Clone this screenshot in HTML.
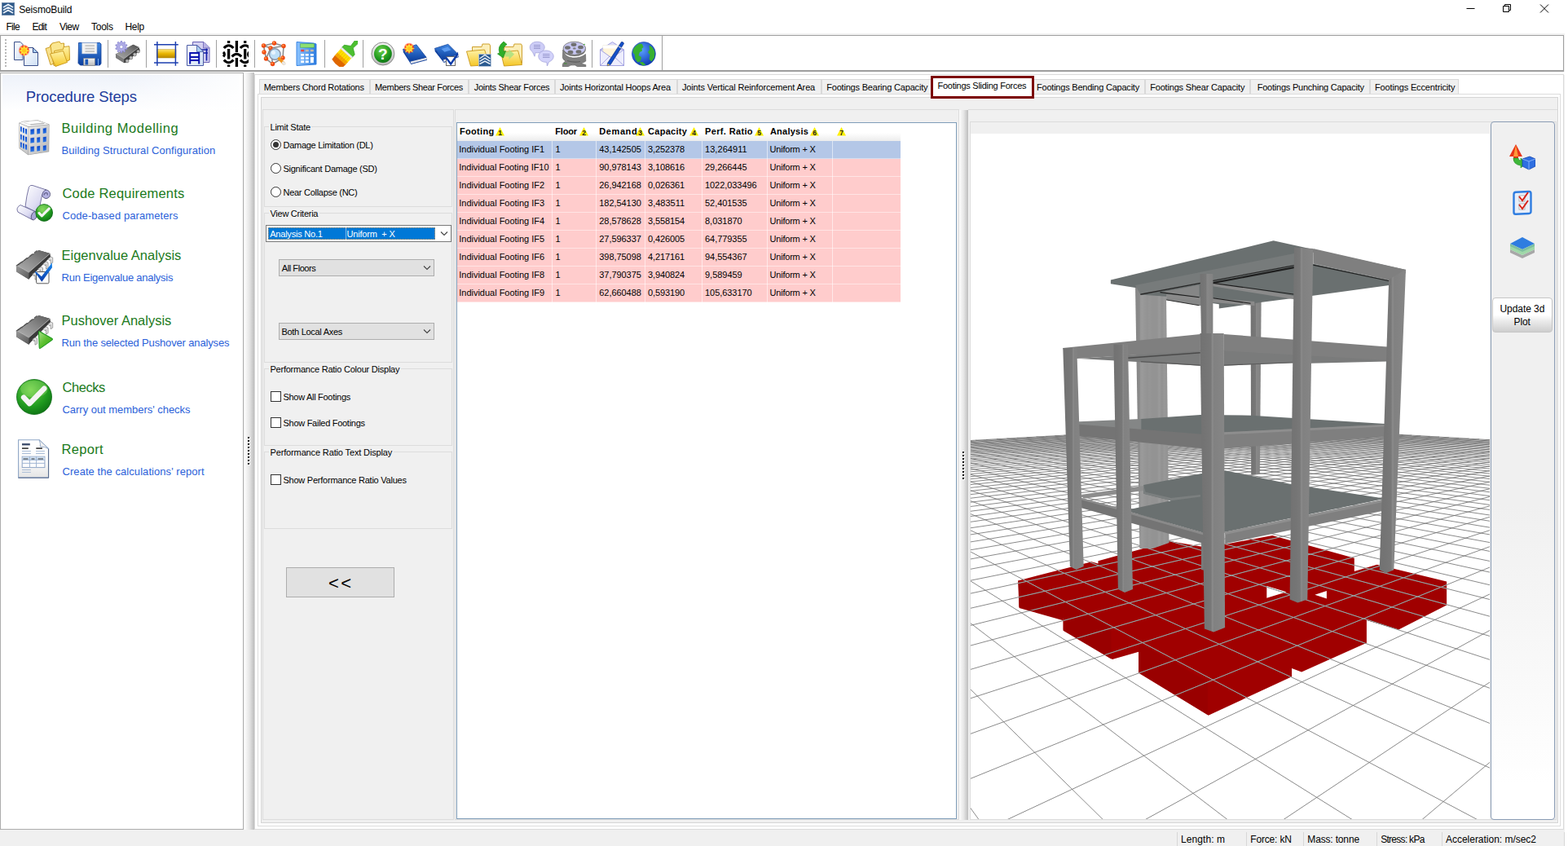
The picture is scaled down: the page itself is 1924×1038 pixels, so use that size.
<!DOCTYPE html>
<html lang="en"><head><meta charset="utf-8"><title>SeismoBuild</title>
<style>
*{box-sizing:border-box;margin:0;padding:0}
html,body{width:1924px;height:1038px;overflow:hidden;background:#fff}
body{position:relative;font-family:"Liberation Sans",sans-serif;font-size:11px;color:#000}
div,span,svg{position:absolute}
.grp{position:absolute;left:0;top:0;width:0;height:0}
.t{white-space:pre;line-height:normal;display:block}
#win{left:0;top:41px;width:1920px;height:997px;background:#f0f0f0}
#titlebar{left:0;top:0;width:1924px;height:22px;background:#fff}
#menubar{left:0;top:22px;width:1924px;height:19px;background:#fff}
#toolbar{left:0;top:43px;width:1919px;height:45px;background:#fff;border:1px solid #a0a0a0;border-bottom:2px solid #9e9e9e}
#gap{left:0;top:88px;width:1920px;height:4px;background:#fdfdfd}
#tbend{left:812px;top:44px;width:1px;height:42px;background:#a0a0a0}
.sep{width:1px;top:49px;height:34px;background:#a0a0a0}
#leftpanel{left:0;top:89px;width:299px;height:929px;background:#fff;border:1px solid #adadad}
#lphead{left:2px;top:2px;width:291px;height:44px;background:linear-gradient(90deg,rgba(255,255,255,0) 50%,rgba(255,255,255,.85) 100%),linear-gradient(#eef2fa,#fff)}
.split{background:linear-gradient(90deg,#fdfdfd,#e6e6e6 50%,#bdbdbd)}
#split1{left:300px;top:89px;width:12px;height:929px}
#split2{left:1177px;top:135px;width:11px;height:871px}
.dots{width:2px;background:repeating-linear-gradient(#111 0 2px,transparent 2px 4px)}
.dots.w{background:repeating-linear-gradient(#fff 0 2px,transparent 2px 4px)}
#rc{left:312px;top:91px;width:1607px;height:927px;background:#fff;border:1px solid #dadada}
.tab{top:97px;height:19px;background:#f0f0f0;border:1px solid #d9d9d9;border-bottom:none}
#tabact{left:1142px;top:93px;width:127px;height:28px;background:#fff;border:3px solid #7b0000}
#tabpage{left:316px;top:115px;width:1599px;height:899px;background:#fff;border:1px solid #dcdcdc}
#inner{left:320px;top:119px;width:1592px;height:891px;background:#f0f0f0;border:1px solid #d5d5d5}
.pn{border:1px solid #dcdcdc;background:#f0f0f0}
#ctl{left:322px;top:134px;width:235px;height:872px}
#tblpn{left:558px;top:134px;width:619px;height:872px}
#tbl{left:560px;top:150px;width:614px;height:855px;background:#fff;border:1px solid #7f9db9}
#vpn{left:1190px;top:149px;width:720px;height:857px}
#view{left:1191px;top:164px;width:637px;height:841px;background:#fff;overflow:hidden}
#rtb{left:1829px;top:149px;width:79px;height:857px;border:1px solid #8a9cb4;border-radius:4px;background:linear-gradient(#f0f0f0 0,#f0f0f0 55%,#fff 95%)}
#upd{left:1831px;top:365px;width:74px;height:43px;border:1px solid #c6c6c6;border-radius:4px;background:linear-gradient(#fff 0,#fff 50%,#ebebeb 68%,#cecece 100%)}
.gb{border:1px solid #dcdcdc}
.gbl{background:#f0f0f0;height:12px}
.radio{width:13px;height:13px;border-radius:50%;border:1px solid #333;background:#fff}
.radio i{position:absolute;left:2px;top:2px;width:7px;height:7px;border-radius:50%;background:#333}
.chk{width:13px;height:13px;border:1px solid #333;background:#fff}
.combo{background:#e1e1e1;border:1px solid #adadad}
#status{left:0;top:1018px;width:1920px;height:20px;background:#f0f0f0}
.ssep{top:1021px;width:1px;height:17px;background:#d7d7d7}

</style></head>
<body>
<div id="titlebar"></div>
<div id="menubar"></div>
<div id="win"></div>
<div id="toolbar"></div><div id="gap"></div>
<div id="tbend"></div>
<svg width="0" height="0" style="left:0;top:0"><defs><linearGradient id="gFold" x1="0" y1="0" x2="0" y2="1"><stop offset="0" stop-color="#fff3a8"/><stop offset="1" stop-color="#f4c626"/></linearGradient><linearGradient id="gDoc" x1="0" y1="0" x2="1" y2="1"><stop offset="0" stop-color="#ffffff"/><stop offset="1" stop-color="#cfe0f5"/></linearGradient><linearGradient id="gBlue" x1="0" y1="0" x2="0" y2="1"><stop offset="0" stop-color="#3f86e0"/><stop offset="1" stop-color="#0b3f9f"/></linearGradient><linearGradient id="gChip" x1="0" y1="0" x2="1" y2="1"><stop offset="0" stop-color="#9a9a9a"/><stop offset="1" stop-color="#3c3c3c"/></linearGradient><linearGradient id="gGold" x1="0" y1="0" x2="0" y2="1"><stop offset="0" stop-color="#ffe36a"/><stop offset=".5" stop-color="#e8b400"/><stop offset="1" stop-color="#b88700"/></linearGradient><radialGradient id="gGreen" cx=".4" cy=".3" r=".8"><stop offset="0" stop-color="#6fd04a"/><stop offset=".6" stop-color="#1f9a1f"/><stop offset="1" stop-color="#0a6a12"/></radialGradient><radialGradient id="gGlobe" cx=".4" cy=".35" r=".7"><stop offset="0" stop-color="#5aa0ff"/><stop offset="1" stop-color="#0a35b0"/></radialGradient><radialGradient id="gSpark" cx=".5" cy=".5" r=".5"><stop offset="0" stop-color="#ffe24a"/><stop offset=".45" stop-color="#ffb020"/><stop offset=".7" stop-color="#ff3a20"/><stop offset="1" stop-color="#ff3a20" stop-opacity="0"/></radialGradient><linearGradient id="gLav" x1="0" y1="0" x2="1" y2="1"><stop offset="0" stop-color="#ffffff"/><stop offset="1" stop-color="#b9b6e8"/></linearGradient><linearGradient id="gGrey" x1="0" y1="0" x2="0" y2="1"><stop offset="0" stop-color="#f4f4f4"/><stop offset="1" stop-color="#b9b9b9"/></linearGradient><linearGradient id="gCalc" x1="0" y1="0" x2="1" y2="0"><stop offset="0" stop-color="#8cc4ff"/><stop offset="1" stop-color="#2f7de0"/></linearGradient></defs></svg>
<div style="left:6px;top:48px;width:2px;height:34px;background:repeating-linear-gradient(#b8b8b8 0 2px,transparent 2px 4px)"></div>
<div class="sep" style="left:132px"></div>
<div class="sep" style="left:179px"></div>
<div class="sep" style="left:265px"></div>
<div class="sep" style="left:312px"></div>
<div class="sep" style="left:398px"></div>
<div class="sep" style="left:445px"></div>
<div class="sep" style="left:726px"></div>
<svg style="left:16px;top:50px" width="32" height="32" viewBox="0 0 32 32"><path d="M1.500 1.500h7.500l3 3v19h-10.500z" fill="url(#gDoc)" stroke="#3a4f8a"/><path d="M13.500 8.500h11l6 6v16h-17z" fill="url(#gDoc)" stroke="#3a4f8a"/><path d="M24.500 8.500v6h6z" fill="#a9cdf0" stroke="#3a4f8a"/><circle cx="13.600" cy="11.800" r="7.200" fill="url(#gSpark)"/><path d="M13.600 5l1.300 4.300 3.900-2.200-2.200 3.900 4.300 1.300-4.300 1.300 2.200 3.900-3.900-2.200-1.300 4.300-1.300-4.300-3.900 2.200 2.200-3.900-4.300-1.300 4.300-1.300-2.200-3.900 3.900 2.200z" fill="#ffe23a"/><circle cx="13.600" cy="11.800" r="2.600" fill="#ffc81a"/></svg>
<svg style="left:55px;top:50px" width="32" height="32" viewBox="0 0 32 32"><path d="M1 9.500l5-1.500 1-3 8.500-2 1 2.500 3.500-1 4 19-17 6z" fill="#f8e08a" stroke="#c8961a" stroke-width=".9"/><path d="M7 6.500l2-3.500 9-2 1.500 2.500 4-.5v5l5.500-.5 1 16-19 7z" fill="#fae690" stroke="#c8961a" stroke-width=".9"/><path d="M11.500 12.500l11-2 .5-3 7-.8 .5 16.800-17 7.500z" fill="url(#gFold)" stroke="#c8961a" stroke-width=".9"/><path d="M6.500 16l16-3.500 5 14-14.500 5z" fill="url(#gFold)" stroke="#c8961a" stroke-width=".9"/></svg>
<svg style="left:94px;top:50px" width="32" height="32" viewBox="0 0 32 32"><path d="M2.500 2.500h26l1.500 1.500v24l-1.500 2h-24l-2.500-2.500z" fill="url(#gBlue)" stroke="#0a3a94" stroke-width=".8"/><path d="M6.500 2.500h18.500v13.500h-18.500z" fill="#f2f2f2" stroke="#8aa6d0" stroke-width=".6"/><path d="M10.500 6.200h11.500M10.500 9.700h11.500M10.500 13.200h11.500" stroke="#c4c4c4" stroke-width="1.700"/><path d="M8.500 21.500h14v9h-14z" fill="url(#gGrey)" stroke="#7a7a7a" stroke-width=".6"/><rect x="10.500" y="22.700" width="3.600" height="6.800" fill="#1b58b8"/><path d="M26.500 22v8" stroke="#7fb0f0" stroke-width="1"/></svg>
<svg style="left:140px;top:50px" width="32" height="32" viewBox="0 0 32 32"><defs><linearGradient id="gChipTop32" x1="0" y1="1" x2="1" y2="0"><stop offset="0" stop-color="#a8a8a8"/><stop offset=".6" stop-color="#7c7c7c"/><stop offset="1" stop-color="#4a4a4a"/></linearGradient></defs><path d="M1.900 16.400L23.400 4.800l7 3.200 1.400 3.800-17.300 14.900-1.900 .5-10.200-6.100z" fill="#3c3c3c"/><path d="M2.800 16L23.400 4.800l7 3.200-18.200 14z" fill="url(#gChipTop32)"/><path d="M1.900 16.400l.9-.4 9.400 6v5.200l-9.800-6.100z" fill="#7c7c7c"/><path d="M2.800 16l9.400 6L30.400 8" fill="none" stroke="#cfcfcf" stroke-width=".6"/><circle cx="16" cy="24.800" r="2.100" fill="#bdbdbd" stroke="#555" stroke-width=".6"/><circle cx="20.700" cy="20.800" r="2.100" fill="#bdbdbd" stroke="#555" stroke-width=".6"/><circle cx="25.300" cy="16.800" r="2.100" fill="#bdbdbd" stroke="#555" stroke-width=".6"/><circle cx="29.600" cy="13" r="1.900" fill="#bdbdbd" stroke="#555" stroke-width=".6"/><polygon points="8.2,0.3 9.6,0.3 10.0,2.4 11.0,2.7 12.6,1.3 13.8,2.2 12.9,4.1 13.5,4.9 15.6,4.7 16.0,6.0 14.2,7.1 14.2,8.1 16.0,9.2 15.6,10.5 13.5,10.3 12.9,11.1 13.8,13.0 12.6,13.9 11.0,12.5 10.0,12.8 9.6,14.9 8.2,14.9 7.8,12.8 6.8,12.5 5.2,13.9 4.0,13.0 4.9,11.1 4.3,10.3 2.2,10.5 1.8,9.2 3.6,8.1 3.6,7.1 1.8,6.0 2.2,4.7 4.3,4.9 4.9,4.1 4.0,2.2 5.2,1.3 6.8,2.7 7.8,2.4" fill="#aeabe6" stroke="#7d7ac8" stroke-width=".7"/><circle cx="8.900" cy="7.600" r="2" fill="#fff" stroke="#7d7ac8" stroke-width=".5"/></svg>
<svg style="left:188px;top:50px" width="32" height="32" viewBox="0 0 32 32"><rect x="4.200" y="10.800" width="23.800" height="10.200" fill="url(#gGold)" stroke="#b08a10" stroke-width=".5"/><path d="M4.900 1v29.700M27.400 1v29.700M1 4.800h29.800M1 27h29.800" stroke="#1d3fb0" stroke-width="1.500" fill="none"/></svg>
<svg style="left:227px;top:50px" width="32" height="32" viewBox="0 0 32 32"><path d="M9.500 1.500h13.500l7 7v18h-20.500z" fill="#d4d0f0" stroke="#6a62b5"/><path d="M22.500 1.500v7.500h7.500" fill="#b8b2e4" stroke="#6a62b5" stroke-width=".8"/><path d="M20 11h8M20 15h8M26.500 9.500v15" stroke="#1420a8" stroke-width="1.700" fill="none"/><path d="M2.500 5.500h12.500l7.500 7.500v17.500h-20z" fill="url(#gDoc)" stroke="#4a5aa5"/><path d="M14.500 5.500v8h8z" fill="#a9cdf0" stroke="#4a5aa5" stroke-width=".8"/><path d="M5.200 15h13M5.200 20h13M5.200 24h13M6.200 14v14.500M17.200 14v14.500" stroke="#0a14b0" stroke-width="2" fill="none"/></svg>
<svg style="left:273px;top:50px" width="32" height="32" viewBox="0 0 32 32"><path d="M7.600 0v3M7.600 10v12.500M7.600 29.500v2.500M17.400 0v14M17.400 21v11M27.700 0v3M27.700 10v12.500M27.700 29.500v2.500" stroke="#000" stroke-width="3.300" fill="none"/><path d="M1.800 9q5.800-6.500 11.600 0M21.900 9q5.800-6.500 11.600 0M11.600 19.500q5.800-6.500 11.600 0M1.800 23.500q5.800 6.500 11.600 0M21.900 23.500q5.800 6.500 11.600 0M1 14q2.800 2.500 0 5.500M33 14q-2.800 2.500 0 5.500" stroke="#000" stroke-width="3.100" fill="none"/></svg>
<svg style="left:320px;top:50px" width="32" height="32" viewBox="0 0 32 32"><path d="M3.500 6L16.500 3 28 6.500 27 21 14.500 28.500 6.500 22zM3.500 6l8.500 3 16-2.500M12 9l-5.500 13M12 9l2.500 19.500" fill="none" stroke="#8a8a8a" stroke-width="1.600"/><circle cx="3.5" cy="6" r="2.700" fill="#f04a12"/><circle cx="2.9" cy="5.3" r="1.100" fill="#ff9a4a"/><circle cx="16.5" cy="3" r="2.700" fill="#f04a12"/><circle cx="15.9" cy="2.3" r="1.100" fill="#ff9a4a"/><circle cx="28" cy="6.5" r="2.700" fill="#f04a12"/><circle cx="27.4" cy="5.8" r="1.100" fill="#ff9a4a"/><circle cx="6.5" cy="22" r="2.700" fill="#f04a12"/><circle cx="5.9" cy="21.3" r="1.100" fill="#ff9a4a"/><circle cx="4" cy="14" r="2.700" fill="#f04a12"/><circle cx="3.4" cy="13.3" r="1.100" fill="#ff9a4a"/><circle cx="27" cy="21" r="2.700" fill="#f04a12"/><circle cx="26.4" cy="20.3" r="1.100" fill="#ff9a4a"/><circle cx="14.5" cy="28.5" r="2.700" fill="#f04a12"/><circle cx="13.9" cy="27.8" r="1.100" fill="#ff9a4a"/><circle cx="12" cy="9" r="2.700" fill="#f04a12"/><circle cx="11.4" cy="8.3" r="1.100" fill="#ff9a4a"/><circle cx="17.300" cy="16.500" r="6.800" fill="#bfe0f8" stroke="#8a94a8" stroke-width="1.500"/><circle cx="15.500" cy="14.500" r="2.500" fill="#e8f5ff"/><path d="M22.500 22l6 6" stroke="#f0941a" stroke-width="3.600" stroke-linecap="round"/><path d="M27.500 27l1.300 1.300" stroke="#e8e8e8" stroke-width="3.400" stroke-linecap="round"/></svg>
<svg style="left:359px;top:50px" width="32" height="32" viewBox="0 0 32 32"><path d="M5 1.500l21 1.500 3 1v25l-24 1.500z" fill="url(#gCalc)" stroke="#2a7ae0" stroke-width=".9"/><rect x="9.700" y="3.800" width="16.800" height="4.400" fill="#8fe070" stroke="#4aa83a" stroke-width=".5"/><rect x="10.2" y="10.800" width="3.900" height="2.500" fill="#e8483a"/><rect x="10.2" y="16" width="3.900" height="2.600" fill="#fff"/><rect x="10.2" y="20.2" width="3.900" height="2.600" fill="#fff"/><rect x="15.8" y="10.800" width="3.900" height="2.500" fill="#c8b8a8"/><rect x="15.8" y="16" width="3.900" height="2.600" fill="#fff"/><rect x="15.8" y="20.2" width="3.900" height="2.600" fill="#fff"/><rect x="21.9" y="10.800" width="3.900" height="2.500" fill="#c8b8a8"/><rect x="21.9" y="16" width="3.900" height="2.600" fill="#fff"/><rect x="21.9" y="20.2" width="3.900" height="2.600" fill="#fff"/><rect x="10.200" y="24.300" width="3.900" height="2.800" fill="#fff"/><rect x="15.800" y="24.300" width="3.900" height="2.800" fill="#fff"/><rect x="21.900" y="20.200" width="3.900" height="6.900" fill="#fff"/></svg>
<svg style="left:407px;top:50px" width="32" height="32" viewBox="0 0 32 32"><g transform="rotate(42 16 16)"><path d="M14.300 -5q2.700-2.500 5.400 0l-.8 9 6.800 4.500v4h-17.400v-4l6.800-4.500z" fill="#4cc030" stroke="#2f9a1f" stroke-width=".7"/><rect x="8.300" y="12.300" width="17.400" height="2.800" fill="#ececec" stroke="#b0b0b0" stroke-width=".4"/><path d="M8.300 15h17.400v7h-17.400z" fill="#ffe000"/><path d="M8.300 21h17.400v5h-17.400z" fill="#f8a800"/><path d="M8.300 25.500h17.400l-.5 6q-8 2.500-16.400 0z" fill="#e06400"/><path d="M11 15.500v15.500M14 15.500v16.500M17 15.500v16.500M20 15.500v16.500M23 15.500v15.500" stroke="#d88a00" stroke-width=".6" opacity=".55"/></g></svg>
<svg style="left:454px;top:50px" width="32" height="32" viewBox="0 0 32 32"><circle cx="15.900" cy="16" r="14" fill="url(#gGrey)" stroke="#8a8a8a"/><circle cx="15.900" cy="16" r="10.900" fill="url(#gGreen)"/><text x="15.900" y="23" font-family="Liberation Sans,sans-serif" font-weight="bold" font-size="19" fill="#fff" text-anchor="middle">?</text></svg>
<svg style="left:493px;top:50px" width="32" height="32" viewBox="0 0 32 32"><path d="M1.5 10.4L10.4 24.9 30 20.2 31 23.7 11.4 28.9 1.8 13.9z" fill="#0c3fa0"/><path d="M10.7 25.5L30.5 20.5 30.8 22.8 11.2 27.9z" fill="#eef0f4" stroke="#9aa0b0" stroke-width=".4"/><path d="M1.5 10.4L17.9 4.8 30 20.2 10.4 24.9z" fill="url(#gBlue)" stroke="#0a3a94" stroke-width=".7"/><circle cx="9" cy="9" r="6.800" fill="url(#gSpark)"/><path d="M9 2.500l1.200 4.200 3.800-2.100-2.100 3.800 4.200 1.200-4.200 1.200 2.100 3.800-3.800-2.100-1.200 4.200-1.200-4.200-3.800 2.100 2.100-3.800-4.200-1.200 4.200-1.200-2.100-3.800 3.800 2.100z" fill="#ffe23a"/><circle cx="9" cy="9.600" r="2.400" fill="#ffc81a"/></svg>
<svg style="left:532px;top:50px" width="32" height="32" viewBox="0 0 32 32"><path d="M1.4 9.4L11.7 23 30 16.4 31 19.9 12.7 27 1.7 12.9z" fill="#0c3fa0"/><path d="M12 23.6L30.5 16.7 30.8 19 12.5 26z" fill="#eef0f4" stroke="#9aa0b0" stroke-width=".4"/><path d="M1.4 9.4L17.8 4.3 30 16.4 11.7 23z" fill="url(#gBlue)" stroke="#0a3a94" stroke-width=".7"/><path d="M9.500 10l8-2.500 4 3.700-8 2.600z" fill="#5a9af0"/><rect x="15.500" y="19.500" width="11" height="11" fill="#fff" stroke="#6a6a6a"/><path d="M15.500 19l5.600 7.500 8.900-13.100 .2 4-9 13-6.300-8.500z" fill="#0a3aa8"/></svg>
<svg style="left:571px;top:50px" width="32" height="32" viewBox="0 0 32 32"><path d="M8.500 7.500h11.500l1-3.500h8.500l1 2v21.500h-22z" fill="#fbeeb8" stroke="#c8961a" stroke-width=".9"/><path d="M1.500 13l22-2 6.500 18.500-23.500 1.500z" fill="url(#gFold)" stroke="#c8961a" stroke-width=".9"/><rect x="16.500" y="16.500" width="15" height="15" fill="#2a5a90" stroke="#b8c8dc" stroke-width=".8"/><path d="M17.500 22l6.500-4.500 6.500 4.500M17.500 25.300l6.500-4 6.500 4M17.500 28.500l6.500-3.500 6.500 3.500" stroke="#e8eef6" stroke-width="1.500" fill="none"/></svg>
<svg style="left:610px;top:50px" width="32" height="32" viewBox="0 0 32 32"><g transform="translate(1.500,0)"><path d="M7 7.500h11.500l1-3.500h8.500l1 2v21.500h-22z" fill="#fbeeb8" stroke="#c8961a" stroke-width=".9"/><path d="M3 14l21-2 5 17.500-22 1.500z" fill="url(#gFold)" stroke="#c8961a" stroke-width=".9"/></g><path d="M9.500 13.500h5v-3l6.500 6-6.500 6.500v-3.500h-5z" fill="#a8e080" opacity=".85"/><path d="M8 1q-8 6-5 14l-2.500 1 7 5 3-8.500-2.500 .8q-2-5 4-8.800z" fill="#2eae28" stroke="#1a8a1a" stroke-width=".7"/></svg>
<svg style="left:649px;top:50px" width="32" height="32" viewBox="0 0 32 32"><path d="M10.200 1.200c5.200 0 9 3 9 6.800s-3.800 6.800-9 6.800c-.8 0-1.600-.1-2.300-.2l-.9 4.600-2.600-5.600c-2-1.300-3.200-3.300-3.200-5.600 0-3.800 3.800-6.800 9-6.800z" fill="#ccccf6" stroke="#a4a4dc" stroke-width=".8"/><path d="M6 5.500h8M6 7.500h8M6 9.500h8" stroke="#8a8ac4" stroke-width=".8"/><path d="M21 12c5.200 0 9.200 3.200 9.200 7.200 0 3-2.300 5.500-5.600 6.600l-2.200 5.200-.6-4.700c-.3 0-.5 0-.8 0-5.200 0-9.200-3.200-9.200-7.200s4-7.100 9.200-7.100z" fill="#d2d2fa" stroke="#a4a4dc" stroke-width=".8"/><path d="M17 16.500h8.500M17 18.500h8.500M17 20.500h8.500" stroke="#8a8ac4" stroke-width=".8"/></svg>
<svg style="left:688px;top:50px" width="32" height="32" viewBox="0 0 32 32"><path d="M2.800 11q1.500 9 12 10 9.500 .500 15.700-4.500l.3 8.500q-3 2-6 3l6 1.500v2.500h-10l-3-2q-6-1-9 2h-6.500q-.8-5 4-7-3.500-1.500-4-4.500z" fill="#808080" stroke="#5a5a5a" stroke-width=".6"/><path d="M8 24.500q8 2.500 16 1" fill="none" stroke="#5c5c5c" stroke-width="1.200"/><path d="M4 28h3.500" stroke="#3a8a2a" stroke-width="1"/><ellipse cx="16.800" cy="10.400" rx="14" ry="8.600" fill="#6a6a6a"/><ellipse cx="16.800" cy="9.200" rx="13.700" ry="8" fill="#c6c6f2" stroke="#8a8a8a" stroke-width="1"/><ellipse cx="16" cy="4.8" rx="3.400" ry="2.200" fill="#707070"/><ellipse cx="8.5" cy="8.5" rx="3.400" ry="2.200" fill="#707070"/><ellipse cx="24.5" cy="8" rx="3.400" ry="2.200" fill="#707070"/><ellipse cx="12" cy="14" rx="3.400" ry="2.200" fill="#707070"/><ellipse cx="22" cy="13.5" rx="3.400" ry="2.200" fill="#707070"/><ellipse cx="16.800" cy="9.400" rx="1.800" ry="1.200" fill="#808080"/><circle cx="29" cy="4.500" r=".8" fill="#2a9a2a"/></svg>
<svg style="left:735px;top:50px" width="32" height="32" viewBox="0 0 32 32"><path d="M1.500 11L16.500 1.500 30.500 11z" fill="#dcdcfa" stroke="#9a98dc" stroke-width=".9"/><path d="M5 5.500h20v14h-20z" fill="#fff4d8" stroke="#d8d4b8" stroke-width=".5"/><path d="M5 5.500h20v4h-20z" fill="#ffffff"/><path d="M1.500 11l14 10 15-10v19.500h-29z" fill="#eeeefe" stroke="#9a98dc" stroke-width=".9"/><path d="M1.500 30.500l11.500-11.500M30.500 30.500l-12.500-11.500" stroke="#9a98dc" stroke-width=".8"/><path d="M10.500 27.500L27.500 1.500q2.500-.5 3 2L14 29.500l-3.800 1.300z" fill="#1450c8" stroke="#0a2a80" stroke-width=".7"/><path d="M24 7l3.500 2" stroke="#c8c8c8" stroke-width="1.400"/><path d="M10.200 30.800l.6-2.800 2.600 1.700z" fill="#f0c040"/></svg>
<svg style="left:774px;top:50px" width="32" height="32" viewBox="0 0 32 32"><circle cx="15.900" cy="16" r="14.500" fill="url(#gGlobe)" stroke="#1a3ab0" stroke-width=".6"/><path d="M3 11q2-5 7.500-7.500l3.500.5 1.500 4-2 1.500 .5 3-3 1.500-1.500 4 3.500 2-1 5-3.500 1.500-3-4-1-6-2-2zM22.500 5.500l4 2.500 3 5.500-.5 7-3.500 5-3-3 1-5-2.500-3.500 2-3zM10.500 26.500l4-.5 4 3.500-4 1z" fill="#38b030"/></svg>
<svg style="left:2px;top:3px" width="16" height="16" viewBox="0 0 16 16"><rect x=".500" y=".500" width="15" height="15" fill="#2f5a8a" stroke="#6a86a8"/><path d="M2 6l6-3.500 6 3.500M2 9.500l6-3.500 6 3.500M2 13l6-3.500 6 3.500" stroke="#e4ecf6" stroke-width="1.800" fill="none"/></svg>
<div id="leftpanel"><div id="lphead"></div></div>
<svg width="0" height="0" style="left:0;top:0"><defs><linearGradient id="gChipTop" x1="0" y1="1" x2="1" y2="0"><stop offset="0" stop-color="#b0b0b0"/><stop offset=".5" stop-color="#8a8a8a"/><stop offset="1" stop-color="#5c5c5c"/></linearGradient><linearGradient id="gChipSide" x1="0" y1="0" x2="1" y2="1"><stop offset="0" stop-color="#9a9a9a"/><stop offset="1" stop-color="#5a5a5a"/></linearGradient><linearGradient id="gPlay" x1="0" y1="0" x2="1" y2="1"><stop offset="0" stop-color="#a8e088"/><stop offset=".5" stop-color="#5cc030"/><stop offset="1" stop-color="#3aa818"/></linearGradient><linearGradient id="gTick" x1="0" y1="0" x2="0" y2="1"><stop offset="0" stop-color="#1a8af0"/><stop offset="1" stop-color="#0a3aa8"/></linearGradient><linearGradient id="gRoll" x1="0" y1="0" x2="1" y2="1"><stop offset="0" stop-color="#ffffff"/><stop offset=".6" stop-color="#dddcf2"/><stop offset="1" stop-color="#a9a7d8"/></linearGradient></defs></svg>
<svg style="left:14px;top:140px" width="60" height="60" viewBox="0 0 60 60"><defs><linearGradient id="gBl" x1="0" y1="0" x2="0" y2="1"><stop offset="0" stop-color="#fafafa"/><stop offset="1" stop-color="#c4c4c4"/></linearGradient><linearGradient id="gBr" x1="0" y1="0" x2="1" y2="1"><stop offset="0" stop-color="#eeeeee"/><stop offset="1" stop-color="#b4b4b4"/></linearGradient><linearGradient id="gWin" x1="0" y1="0" x2="0" y2="1"><stop offset="0" stop-color="#0a44c8"/><stop offset="1" stop-color="#2a78e8"/></linearGradient></defs><path d="M9.200 10.700L14.500 8.700 32.400 7.200 46.500 12.400 46.200 46.200 20.500 50.300 9.500 41.900z" fill="#9c9c9c"/><path d="M9.700 11.200L20.800 15.900 20.500 49.700 10 41.500z" fill="url(#gBl)"/><path d="M21.300 15.900L46 12.900 45.700 45.800 21 49.700z" fill="url(#gBr)"/><path d="M10 10.700L14.700 9.200 32.300 7.700 45.500 12.400 20.900 15.300z" fill="#fbfbfb"/><path d="M15.500 10.600L23 8.600 32 8.100 40 11.300 23.500 12.800z" fill="#ffffff" stroke="#c8c8c8" stroke-width=".5"/><path d="M23.300 12.300l17-1.600v1.200l-17 1.600z" fill="#b4b4b4"/><path d="M23.1 18.6L28.2 17.8L28.2 24.7L23.1 25.5z" fill="url(#gWin)" stroke="#efe2cc" stroke-width=".5"/><path d="M31 18L35.5 17.2L35.5 24.1L31 24.9z" fill="url(#gWin)" stroke="#efe2cc" stroke-width=".5"/><path d="M38.4 17.4L43.1 16.6L43.1 23.5L38.4 24.3z" fill="url(#gWin)" stroke="#efe2cc" stroke-width=".5"/><path d="M11 15L12.8 15.8L12.8 22.1L11 21.3z" fill="url(#gWin)"/><path d="M14 16.4L15.9 17.2L15.9 23.5L14 22.7z" fill="url(#gWin)"/><path d="M17 17.8L19.1 18.6L19.1 24.9L17 24.1z" fill="url(#gWin)"/><path d="M23.1 29.2L28.2 28.4L28.2 35.3L23.1 36.1z" fill="url(#gWin)" stroke="#efe2cc" stroke-width=".5"/><path d="M31 28.6L35.5 27.8L35.5 34.7L31 35.5z" fill="url(#gWin)" stroke="#efe2cc" stroke-width=".5"/><path d="M38.4 28L43.1 27.2L43.1 34.1L38.4 34.9z" fill="url(#gWin)" stroke="#efe2cc" stroke-width=".5"/><path d="M11 24.6L12.8 25.4L12.8 31.7L11 30.9z" fill="url(#gWin)"/><path d="M14 26L15.9 26.8L15.9 33.1L14 32.3z" fill="url(#gWin)"/><path d="M17 27.4L19.1 28.2L19.1 34.5L17 33.7z" fill="url(#gWin)"/><path d="M23.1 39.8L28.2 39L28.2 45.9L23.1 46.7z" fill="url(#gWin)" stroke="#efe2cc" stroke-width=".5"/><path d="M31 39.2L35.5 38.4L35.5 45.3L31 46.1z" fill="url(#gWin)" stroke="#efe2cc" stroke-width=".5"/><path d="M38.4 38.6L43.1 37.8L43.1 44.7L38.4 45.5z" fill="url(#gWin)" stroke="#efe2cc" stroke-width=".5"/><path d="M11 34.2L12.8 35L12.8 41.3L11 40.5z" fill="url(#gWin)"/><path d="M14 35.6L15.9 36.4L15.9 42.7L14 41.9z" fill="url(#gWin)"/><path d="M17 37L19.1 37.8L19.1 44.1L17 43.3z" fill="url(#gWin)"/></svg>
<svg style="left:14px;top:220px" width="60" height="60" viewBox="0 0 60 60"><path d="M21.500 9.500Q23 6.500 26 7.500L43 13Q38.500 15 37.500 20L34.800 33Q33.500 38.500 30 40L17 33.500Q18.500 20 21.500 9.500z" fill="url(#gRoll)" stroke="#6a6898" stroke-width=".9"/><path d="M42.500 13a5.300 5.300 0 1 1-.5 10.600q-3.200-.8-4.400-3.600 1-6 4.900-7z" fill="#b4b2e2" stroke="#55537a" stroke-width=".9"/><path d="M40 19.500q.5-3 3-2.800 2 .6 1 2.800" fill="none" stroke="#66648f" stroke-width="1.300"/><path d="M11 31.500L29 39.500Q25 42 25.500 49.500L8 40.200Q5 35 11 31.500z" fill="url(#gRoll)" stroke="#6a6898" stroke-width=".9"/><ellipse cx="27.800" cy="44.800" rx="3.200" ry="5.300" transform="rotate(20 27.800 44.800)" fill="#a9a7d8" stroke="#55537a" stroke-width=".9"/><circle cx="40.2" cy="41" r="10.4" fill="url(#gGreen)" stroke="#0d6a14" stroke-width=".8"/><ellipse cx="40.2" cy="36.32" rx="8.112" ry="4.992" fill="#b8f088" opacity=".28"/><path d="M33.96 41.31L37.39 44.95L46.13 36.01" fill="none" stroke="#f4f4f4" stroke-width="3.12" stroke-linecap="round" stroke-linejoin="round"/></svg>
<svg style="left:14px;top:300px" width="60" height="60" viewBox="0 0 60 60"><path d="M5.800 25.400l27.700-18.500 13.900 4.100 .6 4-24.900 25.500-1.700 2.300-15-9.300z" fill="#3a3a3a"/><path d="M7.500 26L33.500 6.900l13.900 4.100-26 23.100z" fill="url(#gChipTop)"/><path d="M5.800 25.400l1.700 .6 13.900 8.100v8.700l-15-9.300z" fill="url(#gChipSide)"/><path d="M7.500 26l13.900 8.100L47.400 11" fill="none" stroke="#d0d0d0" stroke-width=".7"/><path d="M9 24.300l3.500-2.800 1.500 .5M15.500 19.500l3.500-2.800 1.500 .5M22 14.700l3.500-2.800 1.500 .5M28 10.200l3.500-2.800" fill="none" stroke="#5a5a5a" stroke-width="1.300"/><path d="M25.500 36.500l3.500-2.500 2.500 1.200v6.500l-2.500 1.500v-5.500l-1.500 1v-1.500zM32.500 30l3.500-2.500 2.500 1.200v6.500l-2.500 1.500v-5.500l-1.500 1zM39 23.500l3.500-2.500 2.500 1.200v6.500l-2.500 1.500v-5.500l-1.500 1zM45 17.500l3.500-2.500 2.200 1.200v6l-2.500 1.500v-5l-1.500 1z" fill="#e4e4e4" stroke="#6a6a6a" stroke-width=".6"/><rect x="30.500" y="33.500" width="15.500" height="14.300" rx="1.500" fill="#fbfbfb" stroke="#4a4a4a" stroke-width=".9"/><path d="M29.200 32.400l7.800 6.900 12.700-16.800 .3 5.800-12.700 17.400-8.100-11.300z" fill="url(#gTick)"/></svg>
<svg style="left:14px;top:380px" width="60" height="60" viewBox="0 0 60 60"><path d="M5.800 25.400l27.700-18.500 13.900 4.100 .6 4-24.900 25.500-1.700 2.300-15-9.300z" fill="#3a3a3a"/><path d="M7.500 26L33.500 6.900l13.900 4.100-26 23.100z" fill="url(#gChipTop)"/><path d="M5.800 25.400l1.700 .6 13.900 8.100v8.700l-15-9.300z" fill="url(#gChipSide)"/><path d="M7.500 26l13.900 8.100L47.400 11" fill="none" stroke="#d0d0d0" stroke-width=".7"/><path d="M9 24.300l3.500-2.800 1.500 .5M15.500 19.500l3.500-2.800 1.500 .5M22 14.700l3.500-2.800 1.500 .5M28 10.200l3.500-2.800" fill="none" stroke="#5a5a5a" stroke-width="1.300"/><path d="M25.500 36.500l3.500-2.500 2.500 1.200v6.500l-2.500 1.500v-5.500l-1.500 1v-1.500zM32.500 30l3.500-2.500 2.500 1.200v6.500l-2.500 1.500v-5.500l-1.500 1zM39 23.500l3.500-2.500 2.500 1.200v6.500l-2.500 1.500v-5.500l-1.500 1zM45 17.500l3.500-2.500 2.200 1.200v6l-2.500 1.500v-5l-1.500 1z" fill="#e4e4e4" stroke="#6a6a6a" stroke-width=".6"/><path d="M33.500 27.800q0-1.800 1.600-.9l14.600 8.400q1.600 1-.1 2.100l-13.800 9.700q-1.500 1-1.600-.8z" fill="url(#gPlay)" stroke="#1f9a1f" stroke-width="1.100"/></svg>
<svg style="left:19px;top:464px" width="46" height="46" viewBox="0 0 46 46"><circle cx="23" cy="23" r="21.5" fill="url(#gGreen)" stroke="#0d6a14" stroke-width=".8"/><ellipse cx="23" cy="13.325" rx="16.77" ry="10.32" fill="#b8f088" opacity=".28"/><path d="M10.10 23.64L17.20 31.17L35.25 12.68" fill="none" stroke="#f4f4f4" stroke-width="6.45" stroke-linecap="round" stroke-linejoin="round"/></svg>
<svg style="left:14px;top:532px" width="60" height="60" viewBox="0 0 60 60"><defs><linearGradient id="gPage" x1="0" y1="0" x2="0" y2="1"><stop offset="0" stop-color="#ffffff"/><stop offset=".6" stop-color="#fbfbfb"/><stop offset="1" stop-color="#e4e4e4"/></linearGradient></defs><path d="M8.600 7.700h25.500l11.400 10.800v35.600h-36.900z" fill="url(#gPage)" stroke="#8fa6c6" stroke-width="1.100"/><path d="M45.600 18.500v35.700h-37" fill="none" stroke="#56688a" stroke-width="1"/><path d="M34.100 7.700q2 5 1.200 8.300 5.500-.3 10.200 2.500z" fill="#f2f2f2" stroke="#8fa6c6" stroke-width=".9"/><rect x="13" y="12.100" width="9.800" height="2.300" fill="#3a4a6a"/><rect x="13" y="17.300" width="7.800" height="1.600" fill="#333"/><rect x="30.300" y="17.300" width="7.600" height="1.600" fill="#333"/><path d="M13 21.500h10.900M13 24.500h10.900M30 21.500h10.900M30 24.500h10.900M13 44.500h10.900M13 47.400h10.900" stroke="#a8bcd6" stroke-width="1"/><rect x="13.200" y="28.200" width="27.700" height="13.400" fill="#fdfdfd" stroke="#8fa6c6" stroke-width="1"/><rect x="13.700" y="28.700" width="26.700" height="3.700" fill="#cfe0f2"/><path d="M13.200 32.400h27.700M13.200 36.400h27.700M22.500 28.200v13.400M30.500 28.200v13.400" stroke="#9ab0d0" stroke-width=".9"/><path d="M14.500 31h6M24.500 31h4M32.500 31h6.500" stroke="#333" stroke-width="1.200"/></svg>
<div id="split1" class="split"></div><div class="dots w" style="left:305px;top:537px;height:34px"></div><div class="dots" style="left:304px;top:536px;height:34px"></div>
<div id="rc"></div>
<div class="tab" style="left:318px;width:136px"></div>
<div class="tab" style="left:454px;width:121px"></div>
<div class="tab" style="left:575px;width:106px"></div>
<div class="tab" style="left:681px;width:150px"></div>
<div class="tab" style="left:831px;width:177px"></div>
<div class="tab" style="left:1008px;width:136px"></div>
<div class="tab" style="left:1268px;width:137px"></div>
<div class="tab" style="left:1405px;width:129px"></div>
<div class="tab" style="left:1534px;width:147px"></div>
<div class="tab" style="left:1681px;width:109px;border-right:1px solid #d9d9d9"></div>
<div id="tabpage"></div>
<div id="inner"></div>
<div id="tabact"></div>
<div id="ctl" class="pn"></div>
<div id="tblpn" class="pn"></div>
<div id="split2" class="split"></div><div class="dots w" style="left:1182px;top:555px;height:34px"></div><div class="dots" style="left:1181px;top:554px;height:34px"></div>
<div style="left:1188px;top:134px;width:723px;height:1px;background:#dcdcdc"></div>
<div id="vpn" class="pn"></div>
<!-- group boxes -->
<div class="gb" style="left:324px;top:155px;width:231px;height:99px"></div><div class="gbl" style="left:330px;top:150px;width:52px"></div>
<div class="gb" style="left:324px;top:261px;width:231px;height:184px"></div><div class="gbl" style="left:330px;top:256px;width:62px"></div>
<div class="gb" style="left:324px;top:452px;width:231px;height:95px"></div><div class="gbl" style="left:330px;top:447px;width:162px"></div>
<div class="gb" style="left:324px;top:554px;width:231px;height:95px"></div><div class="gbl" style="left:330px;top:549px;width:153px"></div>
<div class="radio" style="left:332px;top:171px"><i></i></div>
<div class="radio" style="left:332px;top:200px"></div>
<div class="radio" style="left:332px;top:229px"></div>
<div id="cb1" style="left:326px;top:276px;width:228px;height:21px;background:#fff;border:1px solid #7a7a7a"></div>
<div style="left:329px;top:279px;width:205px;height:15px;background:#0078d7;outline:1px dotted #d8a060;outline-offset:-1px"></div>
<div style="left:424px;top:279px;width:1px;height:15px;background:#7fb6e8"></div>
<svg style="left:540px;top:283px" width="10" height="7" viewBox="0 0 10 7"><path d="M1 1.5l4 4 4-4" fill="none" stroke="#444" stroke-width="1.1"/></svg>
<div class="combo" style="left:342px;top:318px;width:191px;height:21px"></div>
<svg style="left:519px;top:325px" width="10" height="7" viewBox="0 0 10 7"><path d="M1 1.5l4 4 4-4" fill="none" stroke="#444" stroke-width="1.1"/></svg>
<div class="combo" style="left:342px;top:396px;width:191px;height:21px"></div>
<svg style="left:519px;top:403px" width="10" height="7" viewBox="0 0 10 7"><path d="M1 1.5l4 4 4-4" fill="none" stroke="#444" stroke-width="1.1"/></svg>
<div class="chk" style="left:332px;top:480px"></div>
<div class="chk" style="left:332px;top:512px"></div>
<div class="chk" style="left:332px;top:582px"></div>
<div class="combo" style="left:351px;top:696px;width:133px;height:37px"></div>
<div id="tbl"></div>
<div style="left:561px;top:151px;width:544px;height:22px;background:linear-gradient(#fff 0,#fff 55%,#ececec 100%)"></div>
<div style="left:561px;top:173px;width:544px;height:22px;background:#b4c7e7;border-bottom:1px solid #d4def0"></div>
<div style="left:561px;top:195px;width:544px;height:22px;background:#ffcccc;border-bottom:1px solid #ffe4e4"></div>
<div style="left:561px;top:217px;width:544px;height:22px;background:#ffcccc;border-bottom:1px solid #ffe4e4"></div>
<div style="left:561px;top:239px;width:544px;height:22px;background:#ffcccc;border-bottom:1px solid #ffe4e4"></div>
<div style="left:561px;top:261px;width:544px;height:22px;background:#ffcccc;border-bottom:1px solid #ffe4e4"></div>
<div style="left:561px;top:283px;width:544px;height:22px;background:#ffcccc;border-bottom:1px solid #ffe4e4"></div>
<div style="left:561px;top:305px;width:544px;height:22px;background:#ffcccc;border-bottom:1px solid #ffe4e4"></div>
<div style="left:561px;top:327px;width:544px;height:22px;background:#ffcccc;border-bottom:1px solid #ffe4e4"></div>
<div style="left:561px;top:349px;width:544px;height:22px;background:#ffcccc;border-bottom:1px solid #ffe4e4"></div>
<div style="left:677px;top:173px;width:1px;height:198px;background:rgba(255,255,255,.55)"></div>
<div style="left:731px;top:173px;width:1px;height:198px;background:rgba(255,255,255,.55)"></div>
<div style="left:791px;top:173px;width:1px;height:198px;background:rgba(255,255,255,.55)"></div>
<div style="left:861px;top:173px;width:1px;height:198px;background:rgba(255,255,255,.55)"></div>
<div style="left:941px;top:173px;width:1px;height:198px;background:rgba(255,255,255,.55)"></div>
<div style="left:1021px;top:173px;width:1px;height:198px;background:rgba(255,255,255,.55)"></div>
<svg style="left:608px;top:156px" width="11" height="11" viewBox="0 0 11 11"><path d="M5.500 0l5.500 10.500h-11z" fill="#ffee00"/><text x="5.500" y="10" font-size="8.500" font-weight="bold" font-family="Liberation Sans,sans-serif" text-anchor="middle" fill="#222">1</text></svg>
<svg style="left:711px;top:156px" width="11" height="11" viewBox="0 0 11 11"><path d="M5.500 0l5.500 10.500h-11z" fill="#ffee00"/><text x="5.500" y="10" font-size="8.500" font-weight="bold" font-family="Liberation Sans,sans-serif" text-anchor="middle" fill="#222">2</text></svg>
<svg style="left:780px;top:156px" width="11" height="11" viewBox="0 0 11 11"><path d="M5.500 0l5.500 10.500h-11z" fill="#ffee00"/><text x="5.500" y="10" font-size="8.500" font-weight="bold" font-family="Liberation Sans,sans-serif" text-anchor="middle" fill="#222">3</text></svg>
<svg style="left:846px;top:156px" width="11" height="11" viewBox="0 0 11 11"><path d="M5.500 0l5.500 10.500h-11z" fill="#ffee00"/><text x="5.500" y="10" font-size="8.500" font-weight="bold" font-family="Liberation Sans,sans-serif" text-anchor="middle" fill="#222">4</text></svg>
<svg style="left:926px;top:156px" width="11" height="11" viewBox="0 0 11 11"><path d="M5.500 0l5.500 10.500h-11z" fill="#ffee00"/><text x="5.500" y="10" font-size="8.500" font-weight="bold" font-family="Liberation Sans,sans-serif" text-anchor="middle" fill="#222">5</text></svg>
<svg style="left:994px;top:156px" width="11" height="11" viewBox="0 0 11 11"><path d="M5.500 0l5.500 10.500h-11z" fill="#ffee00"/><text x="5.500" y="10" font-size="8.500" font-weight="bold" font-family="Liberation Sans,sans-serif" text-anchor="middle" fill="#222">6</text></svg>
<svg style="left:1027px;top:156px" width="11" height="11" viewBox="0 0 11 11"><path d="M5.500 0l5.500 10.500h-11z" fill="#ffee00"/><text x="5.500" y="10" font-size="8.500" font-weight="bold" font-family="Liberation Sans,sans-serif" text-anchor="middle" fill="#222">7</text></svg>
<div id="view"><svg style="left:0;top:0" width="637" height="841" viewBox="1191 164 637 841" shape-rendering="auto">
<defs><linearGradient id="col" x1="0" x2="1" y1="0" y2="0"><stop offset="0" stop-color="#727272"/><stop offset=".2" stop-color="#747474"/><stop offset=".44" stop-color="#787878"/><stop offset=".5" stop-color="#8c8c8c"/><stop offset=".56" stop-color="#818181"/><stop offset="1" stop-color="#868686"/></linearGradient><linearGradient id="col2" x1="0" x2="1" y1="0" y2="0"><stop offset="0" stop-color="#727272"/><stop offset=".48" stop-color="#787878"/><stop offset=".52" stop-color="#888888"/><stop offset="1" stop-color="#828282"/></linearGradient><linearGradient id="wall" x1="0" x2="1" y1="0" y2="0"><stop offset="0" stop-color="#868686"/><stop offset=".13" stop-color="#8a8a8a"/><stop offset=".14" stop-color="#969696"/><stop offset="0.21" stop-color="#9a9a9a"/><stop offset="0.28" stop-color="#969696"/><stop offset="0.35" stop-color="#939393"/><stop offset="0.43" stop-color="#969696"/><stop offset="0.50" stop-color="#939393"/><stop offset="0.57" stop-color="#939393"/><stop offset="0.64" stop-color="#939393"/><stop offset="0.71" stop-color="#9a9a9a"/><stop offset="0.79" stop-color="#919191"/><stop offset="0.86" stop-color="#989898"/><stop offset="0.93" stop-color="#949494"/><stop offset="1.00" stop-color="#939393"/></linearGradient></defs>
<polygon points="1249.2,712.4 1339.4,689.3 1347.5,691.6 1347.5,688.2 1435.4,663.9 1485.0,672.5 1500.0,668.5 1561.3,656.9 1661.8,684.7 1661.8,700.9 1689.6,692.8 1775.1,713.6 1775.1,742.5 1716.2,772.5 1676.9,761.0 1676.9,788.7 1597.1,824.6 1585.1,820.0 1585.1,830.3 1500.0,869.7 1482.8,877.7 1397.2,825.7 1397.2,799.8 1364.9,809.1 1304.7,772.5 1304.7,758.7 1250.4,744.8" fill="#a00000" />
<polygon points="1554.3,718.9 1578.6,726.3 1554.3,733.7" fill="#fff" />
<polygon points="1613.3,729.8 1627.9,725.1 1627.9,734.4" fill="#fff" />
<polygon points="1249.6,712.2 1304.6,738.2 1304.6,761.3 1250.6,745.9" fill="#990000" />
<polygon points="1304.6,738.2 1363.4,770.0 1363.4,808.5 1304.6,773.8" fill="#990000" />
<polygon points="1397.1,788.3 1481.9,836.5 1481.9,877.0 1397.1,824.9" fill="#990000" />
<defs><path id="grid" d="M1186.0 540.8L1523.1 521.9M1186.0 541.8L1529.6 522.3M1186.0 542.9L1536.2 522.7M1186.0 544.1L1543.0 523.1M1186.0 545.2L1549.9 523.5M1186.0 546.4L1556.9 523.9M1186.0 547.7L1564.0 524.3M1186.0 549.0L1571.3 524.7M1186.0 550.3L1578.8 525.2M1186.0 551.7L1586.3 525.6M1186.0 553.2L1594.1 526.1M1186.0 554.7L1602.0 526.5M1186.0 556.3L1610.0 527.0M1186.0 557.9L1618.3 527.5M1186.0 559.6L1626.7 528.0M1186.0 561.4L1635.2 528.5M1186.0 563.3L1644.0 529.0M1186.0 565.3L1653.0 529.5M1186.0 567.3L1662.1 530.0M1186.0 569.5L1671.5 530.6M1186.0 571.8L1681.0 531.1M1186.0 574.1L1690.8 531.7M1186.0 576.7L1700.8 532.3M1186.0 579.3L1711.0 532.9M1186.0 582.1L1721.5 533.5M1186.0 585.1L1732.2 534.1M1186.0 588.2L1743.2 534.8M1186.0 591.5L1754.5 535.4M1186.0 595.1L1766.0 536.1M1186.0 598.9L1777.8 536.8M1186.0 602.9L1790.0 537.5M1186.0 607.2L1802.4 538.2M1186.0 611.8L1815.1 538.9M1186.0 616.8L1828.2 539.7M1186.0 622.1L1833.0 541.6M1186.0 627.9L1833.0 544.2M1186.0 634.2L1833.0 547.1M1186.0 641.0L1833.0 550.2M1186.0 648.5L1833.0 553.6M1186.0 656.7L1833.0 557.3M1186.0 665.7L1833.0 561.4M1186.0 675.6L1833.0 565.9M1186.0 686.8L1833.0 571.0M1186.0 699.2L1833.0 576.6M1186.0 713.2L1833.0 583.0M1186.0 729.2L1833.0 590.2M1186.0 747.4L1833.0 598.6M1186.0 768.6L1833.0 608.2M1186.0 793.4L1833.0 619.5M1186.0 822.8L1833.0 632.8M1186.0 858.4L1833.0 649.0M1186.0 902.1L1833.0 668.9M1186.0 957.3L1833.0 694.0M1226.5 1010.0L1833.0 726.6M1397.2 1010.0L1833.0 770.7M1568.3 1010.0L1833.0 833.7M1739.8 1010.0L1833.0 931.1M1186.0 984.8L1204.3 1010.0M1186.0 841.0L1357.9 1010.0M1186.0 760.9L1511.9 1010.0M1186.0 709.8L1666.3 1010.0M1186.0 674.4L1821.1 1010.0M1186.0 648.5L1833.0 944.5M1186.0 628.6L1833.0 889.5M1186.0 612.9L1833.0 846.1M1186.0 600.2L1833.0 811.0M1186.0 589.7L1833.0 782.0M1186.0 580.9L1833.0 757.6M1186.0 573.4L1833.0 736.8M1186.0 566.9L1833.0 718.9M1186.0 561.3L1833.0 703.2M1186.0 556.3L1833.0 689.5M1186.0 551.9L1833.0 677.4M1186.0 548.0L1833.0 666.5M1186.0 544.5L1833.0 656.8M1186.0 541.3L1833.0 648.0M1197.0 540.2L1833.0 640.1M1210.1 539.5L1833.0 632.8M1223.0 538.7L1833.0 626.2M1235.5 538.0L1833.0 620.1M1247.8 537.3L1833.0 614.4M1259.8 536.7L1833.0 609.2M1271.6 536.0L1833.0 604.4M1283.1 535.4L1833.0 599.9M1294.4 534.7L1833.0 595.8M1305.4 534.1L1833.0 591.9M1316.3 533.5L1833.0 588.2M1326.9 532.9L1833.0 584.8M1337.3 532.3L1833.0 581.6M1347.5 531.8L1833.0 578.5M1357.5 531.2L1833.0 575.6M1367.3 530.7L1833.0 572.9M1376.9 530.1L1833.0 570.4M1386.3 529.6L1833.0 567.9M1395.6 529.1L1833.0 565.6M1404.6 528.6L1833.0 563.4M1413.6 528.1L1833.0 561.3M1422.3 527.6L1833.0 559.4M1430.9 527.1L1833.0 557.5M1439.3 526.6L1833.0 555.6M1447.6 526.2L1833.0 553.9M1455.8 525.7L1833.0 552.2M1463.8 525.3L1833.0 550.7M1471.6 524.8L1833.0 549.1M1479.4 524.4L1833.0 547.7M1487.0 524.0L1833.0 546.3M1494.4 523.5L1833.0 544.9M1501.8 523.1L1833.0 543.6M1509.0 522.7L1833.0 542.4M1516.1 522.3L1833.0 541.2M1523.1 521.9L1833.0 540.0"/></defs><use href="#grid" stroke="#6c6c6c" stroke-width=".8" fill="none"/>
<clipPath id="redclip"><polygon points="1249.2,712.4 1339.4,689.3 1347.5,691.6 1347.5,688.2 1435.4,663.9 1485.0,672.5 1500.0,668.5 1561.3,656.9 1661.8,684.7 1661.8,700.9 1689.6,692.8 1775.1,713.6 1775.1,742.5 1716.2,772.5 1676.9,761.0 1676.9,788.7 1597.1,824.6 1585.1,820.0 1585.1,830.3 1500.0,869.7 1482.8,877.7 1397.2,825.7 1397.2,799.8 1364.9,809.1 1304.7,772.5 1304.7,758.7 1250.4,744.8"/></clipPath>
<g clip-path="url(#redclip)"><use href="#grid" stroke="#9aa8a8" stroke-width="1" fill="none"/></g>
<polygon points="1393.0,350.0 1431.0,362.0 1434.5,666.0 1414.6,673.0 1398.4,673.0" fill="url(#wall)" />
<polygon points="1534.6,362.0 1547.7,362.0 1545.8,582.0 1540.0,582.0 1535.2,582.0" fill="url(#col2)" />
<polygon points="1474.0,640.0 1479.0,640.0 1479.0,700.0 1474.0,699.0" fill="#7a7a7a" />
<polygon points="1380.3,626.2 1436.9,614.2 1403.2,605.8 1403.2,594.9 1473.0,581.2 1503.2,577.3 1582.6,593.7 1699.4,611.8 1503.2,652.7 1477.9,653.9" fill="#6a7070" />
<polygon points="1403.2,594.9 1403.2,605.8 1436.9,614.2 1473.0,609.4 1473.0,607.0 1436.9,611.1 1405.6,603.8" fill="#7b7f7f" />
<polygon points="1326.1,607.0 1403.2,596.1 1403.2,602.1 1329.7,611.8" fill="#8d8d8d" />
<polygon points="1316.5,608.2 1371.9,623.1 1371.9,635.9 1316.5,620.2" fill="#747474" />
<polygon points="1316.5,608.2 1371.9,623.1 1371.9,625.5 1316.5,610.6" fill="#8c8c8c" />
<polygon points="1380.3,626.2 1477.9,653.9 1477.9,667.2 1380.3,639.5" fill="#747474" />
<polygon points="1380.3,626.2 1477.9,653.9 1477.9,656.8 1380.3,629.1" fill="#8a8a8a" />
<polygon points="1503.2,652.7 1699.4,612.5 1699.4,626.2 1503.2,667.2" fill="#7f7f7f" />
<polygon points="1503.2,652.7 1699.4,612.5 1699.4,615.4 1503.2,655.9" fill="#8f8f8f" />
<polygon points="1312.6,517.7 1400.2,514.0 1400.2,527.8 1312.6,520.7" fill="#848686" />
<polygon points="1400.2,514.0 1472.9,509.0 1535.5,509.7 1703.3,520.2 1703.3,521.5 1501.7,531.3 1477.9,533.5 1400.2,527.5" fill="#6a7070" />
<polygon points="1312.6,519.7 1475.4,532.8 1475.4,550.3 1312.6,534.0" fill="#747474" />
<polygon points="1501.7,530.3 1703.3,520.7 1703.3,535.3 1501.7,550.3" fill="#7f7f7f" />
<polygon points="1501.7,530.3 1703.3,520.7 1703.3,523.2 1501.7,533.3" fill="#8e8e8e" />
<polygon points="1324.3,440.0 1472.9,429.5 1472.9,448.7 1399.8,444.2" fill="#7a7b7b" />
<polygon points="1384.0,438.5 1472.9,432.0 1472.9,433.5 1384.0,440.0" fill="#4a4a4a" />
<polygon points="1399.8,443.0 1472.9,447.5 1472.9,448.7 1399.8,444.2" fill="#5a5a5a" />
<polygon points="1501.5,429.5 1587.3,434.5 1587.3,445.3 1501.5,448.7" fill="#7a7b7b" />
<polygon points="1501.5,447.5 1587.3,444.2 1587.3,445.3 1501.5,448.7" fill="#5a5a5a" />
<polygon points="1609.0,435.5 1703.9,440.0 1701.6,443.5 1609.0,445.8" fill="#7a7b7b" />
<polygon points="1304.2,427.0 1472.9,409.9 1472.9,430.4 1309.4,440.7" fill="#7f7f7f" />
<polygon points="1501.5,409.9 1708.5,425.9 1703.9,441.9 1501.5,430.4" fill="#7f7f7f" />
<polygon points="1362.9,343.6 1562.6,295.3 1724.7,330.9 1724.7,335.5 1611.3,309.7 1589.1,311.8 1393.0,353.1 1362.9,348.3" fill="#6a7070" />
<polygon points="1399.4,361.6 1588.0,325.6 1611.3,323.5 1704.6,343.6 1704.6,350.0 1611.3,362.7 1546.7,371.1 1495.8,378.6 1495.8,373.3 1431.1,363.7" fill="#6a7070" />
<polygon points="1488.4,346.1 1588.0,363.1 1588.0,367.3 1488.4,351.2" fill="#8a8a8a" />
<polygon points="1431.1,361.0 1539.3,370.1 1539.3,375.0 1431.1,366.5" fill="#8a8a8a" />
<polygon points="1488.4,346.1 1588.0,327.1 1588.0,329.2 1488.4,348.3" fill="#1e1e1e" />
<polygon points="1611.3,324.5 1704.6,344.2 1704.6,345.3 1611.3,325.8" fill="#1e1e1e" />
<polygon points="1423.6,358.8 1471.6,349.5 1471.6,364.5" fill="#858686" />
<path d="M1423.6 358.6L1471.6 364.8" stroke="#1c1c1c" stroke-width="1.1" fill="none"/>
<path d="M1488.5 365.8L1534.6 372.3" stroke="#1c1c1c" stroke-width="1.1" fill="none"/>
<polygon points="1431.1,365.6 1475.7,369.2 1475.7,375.4 1431.1,368.0" fill="#868787" />
<path d="M1431.1 367.9L1471.6 374.8" stroke="#1c1c1c" stroke-width="0.9" fill="none"/>
<path d="M1488.5 347.4L1590.7 361.5" stroke="#1c1c1c" stroke-width="1.1" fill="none"/>
<polygon points="1393.0,350.0 1589.1,310.7 1588.0,325.6 1399.4,361.6" fill="#777b7b" />
<polygon points="1399.4,360.6 1588.0,324.9 1588.0,326.2 1399.4,362.0" fill="#262626" />
<polygon points="1611.3,305.0 1725.4,330.9 1705.7,344.0 1611.3,323.5" fill="#7f7f7f" />
<polygon points="1472.5,336.0 1488.4,336.0 1488.4,411.0 1480.5,411.0 1474.0,411.0" fill="url(#col2)" />
<polygon points="1304.3,427.0 1321.3,427.0 1329.7,695.0 1320.5,699.0 1312.9,695.0" fill="url(#col)" />
<polygon points="1366.4,422.5 1384.0,422.5 1390.0,723.0 1380.0,727.0 1371.9,723.0" fill="url(#col)" />
<polygon points="1704.2,343.0 1725.0,330.5 1710.3,699.3 1700.6,703.3 1692.7,699.3" fill="url(#col)" />
<polygon points="1472.4,409.0 1501.7,409.0 1503.1,770.0 1489.2,775.5 1477.9,771.5" fill="url(#col)" />
<polygon points="1588.0,303.5 1611.3,305.0 1604.3,735.4 1592.4,739.4 1582.6,735.4" fill="url(#col)" />
</svg></div>
<div id="rtb"></div>
<div id="upd"></div>
<svg style="left:1852px;top:177px" width="32" height="32" viewBox="0 0 32 32"><path d="M8 0l8 15h-5v5h-6v-5h-5z" fill="#e8341a"/><path d="M8 1l3 14h-6z" fill="#ff9a3a"/><path d="M5 17q0 8 9 9v3l7-6-7-6v3q-3 0-3-3z" fill="#3fb83a" stroke="#1f8a1f" stroke-width=".6"/><path d="M16 18l9-3 7 3v9l-8 4-8-4z" fill="#2f6fe0" stroke="#0a3aa8" stroke-width=".7"/><path d="M16 18l8 3 8-3M24 21v10" stroke="#9ac0ff" stroke-width=".8" fill="none"/></svg>
<svg style="left:1856px;top:233px" width="25" height="32" viewBox="0 0 25 32"><rect x="1.500" y="1.500" width="21" height="27" rx="2.500" fill="#e8eef8" stroke="#2f7de0" stroke-width="2.400" transform="skewY(-3) translate(0,1.500)"/><rect x="8" y="7" width="7" height="7" fill="#fff" stroke="#999" stroke-width=".7"/><rect x="8" y="17" width="7" height="7" fill="#fff" stroke="#999" stroke-width=".7"/><path d="M8 8l4 5 7-10M8 18l4 5 7-10" fill="none" stroke="#d8241a" stroke-width="2"/></svg>
<svg style="left:1853px;top:291px" width="30" height="27" viewBox="0 0 30 27"><path d="M0 15l15 7 15-7v4l-15 7-15-7z" fill="#a8a8a8"/><path d="M0 10l15 7 15-7v5l-15 7-15-7z" fill="#9fd8a8"/><path d="M0 8l15-8 15 8-15 7z" fill="#2f7de0"/><path d="M0 8l15 7 15-7v3l-15 7-15-7z" fill="#7fc0a0"/></svg>
<div id="status"></div>
<div class="ssep" style="left:1444px"></div><div class="ssep" style="left:1529px"></div><div class="ssep" style="left:1599px"></div><div class="ssep" style="left:1689px"></div><div class="ssep" style="left:1769px"></div><div class="ssep" style="left:1919px"></div>
<!-- window controls -->
<svg style="left:1790px;top:0" width="130" height="22" viewBox="0 0 130 22"><path d="M9.5 10.5h10M54.5 7.5h7v7h-7zM56.5 7.5v-2h7v7h-2M100 5.5l10 10M110 5.5l-10 10" fill="none" stroke="#000" stroke-width="1"/></svg>
<header id="g-title" class="grp">
<span class="t" id="t0" style="left:23.2px;top:4.8px;font-size:12px;color:#000;letter-spacing:-0.152px;">SeismoBuild</span>
</header>
<nav id="g-menu" class="grp">
<span class="t" id="t1" style="left:7.5px;top:25.8px;font-size:12px;color:#000;letter-spacing:-0.721px;">File</span>
<span class="t" id="t2" style="left:39.5px;top:25.8px;font-size:12px;color:#000;letter-spacing:-0.781px;">Edit</span>
<span class="t" id="t3" style="left:73.0px;top:25.8px;font-size:12px;color:#000;letter-spacing:-0.542px;">View</span>
<span class="t" id="t4" style="left:112.0px;top:25.8px;font-size:12px;color:#000;letter-spacing:-0.253px;">Tools</span>
<span class="t" id="t5" style="left:153.5px;top:25.8px;font-size:12px;color:#000;letter-spacing:-0.335px;">Help</span>
</nav>
<aside id="g-steps" class="grp">
<span class="t" id="t6" style="left:31.8px;top:108.0px;font-size:18.5px;color:#1e3c9c;letter-spacing:-0.111px;">Procedure Steps</span>
<span class="t" id="t7" style="left:75.5px;top:147.7px;font-size:16.5px;color:#1b7a1b;letter-spacing:0.545px;">Building Modelling</span>
<span class="t" id="t8" style="left:75.5px;top:177.3px;font-size:13px;color:#2b5fd9;letter-spacing:0.072px;">Building Structural Configuration</span>
<span class="t" id="t9" style="left:76.5px;top:228.2px;font-size:16.5px;color:#1b7a1b;letter-spacing:0.188px;">Code Requirements</span>
<span class="t" id="t10" style="left:76.5px;top:257.1px;font-size:13px;color:#2b5fd9;letter-spacing:0.091px;">Code-based parameters</span>
<span class="t" id="t11" style="left:75.5px;top:303.9px;font-size:16.5px;color:#1b7a1b;letter-spacing:0.004px;">Eigenvalue Analysis</span>
<span class="t" id="t12" style="left:75.5px;top:332.7px;font-size:13px;color:#2b5fd9;letter-spacing:-0.244px;">Run Eigenvalue analysis</span>
<span class="t" id="t13" style="left:75.5px;top:383.8px;font-size:16.5px;color:#1b7a1b;letter-spacing:0.001px;">Pushover Analysis</span>
<span class="t" id="t14" style="left:75.5px;top:412.8px;font-size:13px;color:#2b5fd9;letter-spacing:-0.152px;">Run the selected Pushover analyses</span>
<span class="t" id="t15" style="left:76.5px;top:465.8px;font-size:16.5px;color:#1b7a1b;letter-spacing:-0.454px;">Checks</span>
<span class="t" id="t16" style="left:76.5px;top:494.8px;font-size:13px;color:#2b5fd9;letter-spacing:-0.033px;">Carry out members' checks</span>
<span class="t" id="t17" style="left:75.5px;top:542.1px;font-size:16.5px;color:#1b7a1b;letter-spacing:0.312px;">Report</span>
<span class="t" id="t18" style="left:76.5px;top:570.9px;font-size:13px;color:#2b5fd9;letter-spacing:0.061px;">Create the calculations' report</span>
</aside>
<nav id="g-tabs" class="grp">
<span class="t" id="t19" style="left:323.7px;top:101.2px;font-size:11px;color:#000;letter-spacing:-0.231px;">Members Chord Rotations</span>
<span class="t" id="t20" style="left:460.0px;top:101.2px;font-size:11px;color:#000;letter-spacing:-0.354px;">Members Shear Forces</span>
<span class="t" id="t21" style="left:581.7px;top:101.2px;font-size:11px;color:#000;letter-spacing:-0.279px;">Joints Shear Forces</span>
<span class="t" id="t22" style="left:687.0px;top:101.2px;font-size:11px;color:#000;letter-spacing:-0.216px;">Joints Horizontal Hoops Area</span>
<span class="t" id="t23" style="left:837.0px;top:101.2px;font-size:11px;color:#000;letter-spacing:-0.149px;">Joints Vertical Reinforcement Area</span>
<span class="t" id="t24" style="left:1014.2px;top:101.2px;font-size:11px;color:#000;letter-spacing:-0.196px;">Footings Bearing Capacity</span>
<span class="t" id="t25" style="left:1272.0px;top:101.2px;font-size:11px;color:#000;letter-spacing:-0.220px;">Footings Bending Capacity</span>
<span class="t" id="t26" style="left:1411.2px;top:101.2px;font-size:11px;color:#000;letter-spacing:-0.189px;">Footings Shear Capacity</span>
<span class="t" id="t27" style="left:1542.7px;top:101.2px;font-size:11px;color:#000;letter-spacing:-0.227px;">Footings Punching Capacity</span>
<span class="t" id="t28" style="left:1687.0px;top:101.2px;font-size:11px;color:#000;letter-spacing:-0.149px;">Footings Eccentricity</span>
<span class="t" id="t29" style="left:1150.5px;top:99.2px;font-size:11px;color:#000;letter-spacing:-0.270px;">Footings Sliding Forces</span>
</nav>
<form id="g-controls" class="grp">
<span class="t" id="t30" style="left:331.5px;top:150.0px;font-size:11px;color:#000;letter-spacing:-0.235px;">Limit State</span>
<span class="t" id="t31" style="left:347.5px;top:171.5px;font-size:11px;color:#000;letter-spacing:-0.276px;">Damage Limitation (DL)</span>
<span class="t" id="t32" style="left:347.5px;top:200.6px;font-size:11px;color:#000;letter-spacing:-0.258px;">Significant Damage (SD)</span>
<span class="t" id="t33" style="left:347.5px;top:229.7px;font-size:11px;color:#000;letter-spacing:-0.283px;">Near Collapse (NC)</span>
<span class="t" id="t34" style="left:331.5px;top:255.7px;font-size:11px;color:#000;letter-spacing:-0.269px;">View Criteria</span>
<span class="t" id="t35" style="left:331.2px;top:280.7px;font-size:11px;color:#fff;letter-spacing:-0.211px;">Analysis No.1</span>
<span class="t" id="t36" style="left:425.5px;top:280.7px;font-size:11px;color:#fff;letter-spacing:-0.200px;">Uniform&nbsp; + X</span>
<span class="t" id="t37" style="left:345.8px;top:323.0px;font-size:11px;color:#000;letter-spacing:-0.427px;">All Floors</span>
<span class="t" id="t38" style="left:345.4px;top:400.8px;font-size:11px;color:#000;letter-spacing:-0.285px;">Both Local Axes</span>
<span class="t" id="t39" style="left:331.5px;top:447.0px;font-size:11px;color:#000;letter-spacing:-0.235px;">Performance Ratio Colour Display</span>
<span class="t" id="t40" style="left:347.5px;top:480.8px;font-size:11px;color:#000;letter-spacing:-0.296px;">Show All Footings</span>
<span class="t" id="t41" style="left:347.5px;top:513.0px;font-size:11px;color:#000;letter-spacing:-0.278px;">Show Failed Footings</span>
<span class="t" id="t42" style="left:331.5px;top:549.0px;font-size:11px;color:#000;letter-spacing:-0.140px;">Performance Ratio Text Display</span>
<span class="t" id="t43" style="left:347.5px;top:583.0px;font-size:11px;color:#000;letter-spacing:-0.241px;">Show Performance Ratio Values</span>
<span class="t" id="t44" style="left:402.9px;top:703.1px;font-size:22px;color:#000;letter-spacing:2.452px;">&lt;&lt;</span>
</form>
<section id="g-grid" class="grp">
<span class="t" id="t45" style="left:564.0px;top:154.9px;font-size:11px;color:#000;font-weight:bold;letter-spacing:0.317px;">Footing</span>
<span class="t" id="t46" style="left:681.2px;top:154.9px;font-size:11px;color:#000;font-weight:bold;letter-spacing:-0.153px;">Floor</span>
<span class="t" id="t47" style="left:735.3px;top:154.9px;font-size:11px;color:#000;font-weight:bold;letter-spacing:0.584px;">Demand</span>
<span class="t" id="t48" style="left:795.0px;top:154.9px;font-size:11px;color:#000;font-weight:bold;letter-spacing:0.295px;">Capacity</span>
<span class="t" id="t49" style="left:865.1px;top:154.9px;font-size:11px;color:#000;font-weight:bold;letter-spacing:0.341px;">Perf. Ratio</span>
<span class="t" id="t50" style="left:944.9px;top:154.9px;font-size:11px;color:#000;font-weight:bold;letter-spacing:0.253px;">Analysis</span>
<span class="t" id="t51" style="left:563.3px;top:176.5px;font-size:11px;color:#000;letter-spacing:-0.017px;">Individual Footing IF1</span>
<span class="t" id="t52" style="left:681.5px;top:176.5px;font-size:11px;color:#000;">1</span>
<span class="t" id="t53" style="left:735.3px;top:176.5px;font-size:11px;color:#000;letter-spacing:-0.060px;">43,142505</span>
<span class="t" id="t54" style="left:795.0px;top:176.5px;font-size:11px;color:#000;letter-spacing:-0.109px;">3,252378</span>
<span class="t" id="t55" style="left:865.0px;top:176.5px;font-size:11px;color:#000;letter-spacing:0.055px;">13,264911</span>
<span class="t" id="t56" style="left:944.5px;top:176.5px;font-size:11px;color:#000;letter-spacing:-0.204px;">Uniform + X</span>
<span class="t" id="t57" style="left:563.3px;top:198.5px;font-size:11px;color:#000;letter-spacing:-0.049px;">Individual Footing IF10</span>
<span class="t" id="t58" style="left:681.5px;top:198.5px;font-size:11px;color:#000;">1</span>
<span class="t" id="t59" style="left:735.3px;top:198.5px;font-size:11px;color:#000;letter-spacing:-0.060px;">90,978143</span>
<span class="t" id="t60" style="left:795.0px;top:198.5px;font-size:11px;color:#000;letter-spacing:-0.109px;">3,108616</span>
<span class="t" id="t61" style="left:865.0px;top:198.5px;font-size:11px;color:#000;letter-spacing:-0.047px;">29,266445</span>
<span class="t" id="t62" style="left:944.5px;top:198.5px;font-size:11px;color:#000;letter-spacing:-0.204px;">Uniform + X</span>
<span class="t" id="t63" style="left:563.3px;top:220.5px;font-size:11px;color:#000;letter-spacing:-0.017px;">Individual Footing IF2</span>
<span class="t" id="t64" style="left:681.5px;top:220.5px;font-size:11px;color:#000;">1</span>
<span class="t" id="t65" style="left:735.3px;top:220.5px;font-size:11px;color:#000;letter-spacing:-0.060px;">26,942168</span>
<span class="t" id="t66" style="left:795.0px;top:220.5px;font-size:11px;color:#000;letter-spacing:-0.109px;">0,026361</span>
<span class="t" id="t67" style="left:865.0px;top:220.5px;font-size:11px;color:#000;letter-spacing:-0.062px;">1022,033496</span>
<span class="t" id="t68" style="left:944.5px;top:220.5px;font-size:11px;color:#000;letter-spacing:-0.204px;">Uniform + X</span>
<span class="t" id="t69" style="left:563.3px;top:242.5px;font-size:11px;color:#000;letter-spacing:-0.017px;">Individual Footing IF3</span>
<span class="t" id="t70" style="left:681.5px;top:242.5px;font-size:11px;color:#000;">1</span>
<span class="t" id="t71" style="left:735.3px;top:242.5px;font-size:11px;color:#000;letter-spacing:-0.060px;">182,54130</span>
<span class="t" id="t72" style="left:795.0px;top:242.5px;font-size:11px;color:#000;letter-spacing:0.008px;">3,483511</span>
<span class="t" id="t73" style="left:865.0px;top:242.5px;font-size:11px;color:#000;letter-spacing:-0.047px;">52,401535</span>
<span class="t" id="t74" style="left:944.5px;top:242.5px;font-size:11px;color:#000;letter-spacing:-0.204px;">Uniform + X</span>
<span class="t" id="t75" style="left:563.3px;top:264.5px;font-size:11px;color:#000;letter-spacing:-0.017px;">Individual Footing IF4</span>
<span class="t" id="t76" style="left:681.5px;top:264.5px;font-size:11px;color:#000;">1</span>
<span class="t" id="t77" style="left:735.3px;top:264.5px;font-size:11px;color:#000;letter-spacing:-0.060px;">28,578628</span>
<span class="t" id="t78" style="left:795.0px;top:264.5px;font-size:11px;color:#000;letter-spacing:-0.109px;">3,558154</span>
<span class="t" id="t79" style="left:865.0px;top:264.5px;font-size:11px;color:#000;letter-spacing:-0.023px;">8,031870</span>
<span class="t" id="t80" style="left:944.5px;top:264.5px;font-size:11px;color:#000;letter-spacing:-0.204px;">Uniform + X</span>
<span class="t" id="t81" style="left:563.3px;top:286.5px;font-size:11px;color:#000;letter-spacing:-0.017px;">Individual Footing IF5</span>
<span class="t" id="t82" style="left:681.5px;top:286.5px;font-size:11px;color:#000;">1</span>
<span class="t" id="t83" style="left:735.3px;top:286.5px;font-size:11px;color:#000;letter-spacing:-0.060px;">27,596337</span>
<span class="t" id="t84" style="left:795.0px;top:286.5px;font-size:11px;color:#000;letter-spacing:-0.109px;">0,426005</span>
<span class="t" id="t85" style="left:865.0px;top:286.5px;font-size:11px;color:#000;letter-spacing:-0.047px;">64,779355</span>
<span class="t" id="t86" style="left:944.5px;top:286.5px;font-size:11px;color:#000;letter-spacing:-0.204px;">Uniform + X</span>
<span class="t" id="t87" style="left:563.3px;top:308.5px;font-size:11px;color:#000;letter-spacing:-0.017px;">Individual Footing IF6</span>
<span class="t" id="t88" style="left:681.5px;top:308.5px;font-size:11px;color:#000;">1</span>
<span class="t" id="t89" style="left:735.3px;top:308.5px;font-size:11px;color:#000;letter-spacing:-0.060px;">398,75098</span>
<span class="t" id="t90" style="left:795.0px;top:308.5px;font-size:11px;color:#000;letter-spacing:-0.109px;">4,217161</span>
<span class="t" id="t91" style="left:865.0px;top:308.5px;font-size:11px;color:#000;letter-spacing:-0.047px;">94,554367</span>
<span class="t" id="t92" style="left:944.5px;top:308.5px;font-size:11px;color:#000;letter-spacing:-0.204px;">Uniform + X</span>
<span class="t" id="t93" style="left:563.3px;top:330.5px;font-size:11px;color:#000;letter-spacing:-0.017px;">Individual Footing IF8</span>
<span class="t" id="t94" style="left:681.5px;top:330.5px;font-size:11px;color:#000;">1</span>
<span class="t" id="t95" style="left:735.3px;top:330.5px;font-size:11px;color:#000;letter-spacing:-0.060px;">37,790375</span>
<span class="t" id="t96" style="left:795.0px;top:330.5px;font-size:11px;color:#000;letter-spacing:-0.109px;">3,940824</span>
<span class="t" id="t97" style="left:865.0px;top:330.5px;font-size:11px;color:#000;letter-spacing:-0.023px;">9,589459</span>
<span class="t" id="t98" style="left:944.5px;top:330.5px;font-size:11px;color:#000;letter-spacing:-0.204px;">Uniform + X</span>
<span class="t" id="t99" style="left:563.3px;top:352.5px;font-size:11px;color:#000;letter-spacing:-0.017px;">Individual Footing IF9</span>
<span class="t" id="t100" style="left:681.5px;top:352.5px;font-size:11px;color:#000;">1</span>
<span class="t" id="t101" style="left:735.3px;top:352.5px;font-size:11px;color:#000;letter-spacing:-0.060px;">62,660488</span>
<span class="t" id="t102" style="left:795.0px;top:352.5px;font-size:11px;color:#000;letter-spacing:-0.109px;">0,593190</span>
<span class="t" id="t103" style="left:865.0px;top:352.5px;font-size:11px;color:#000;letter-spacing:-0.055px;">105,633170</span>
<span class="t" id="t104" style="left:944.5px;top:352.5px;font-size:11px;color:#000;letter-spacing:-0.204px;">Uniform + X</span>
</section>
<section id="g-viewtools" class="grp">
<span class="t" id="t105" style="left:1840.5px;top:372.4px;font-size:12px;color:#000;letter-spacing:-0.063px;">Update 3d</span>
<span class="t" id="t106" style="left:1857.5px;top:388.1px;font-size:12px;color:#000;letter-spacing:-0.115px;">Plot</span>
</section>
<footer id="g-statusbar" class="grp">
<span class="t" id="t107" style="left:1449.0px;top:1022.6px;font-size:12px;color:#000;letter-spacing:0.079px;">Length: m</span>
<span class="t" id="t108" style="left:1534.3px;top:1022.6px;font-size:12px;color:#000;letter-spacing:-0.180px;">Force: kN</span>
<span class="t" id="t109" style="left:1604.3px;top:1022.6px;font-size:12px;color:#000;letter-spacing:-0.159px;">Mass: tonne</span>
<span class="t" id="t110" style="left:1694.2px;top:1022.6px;font-size:12px;color:#000;letter-spacing:-0.718px;">Stress: kPa</span>
<span class="t" id="t111" style="left:1774.0px;top:1022.6px;font-size:12px;color:#000;letter-spacing:-0.021px;">Acceleration: m/sec2</span>
</footer>

</body></html>
